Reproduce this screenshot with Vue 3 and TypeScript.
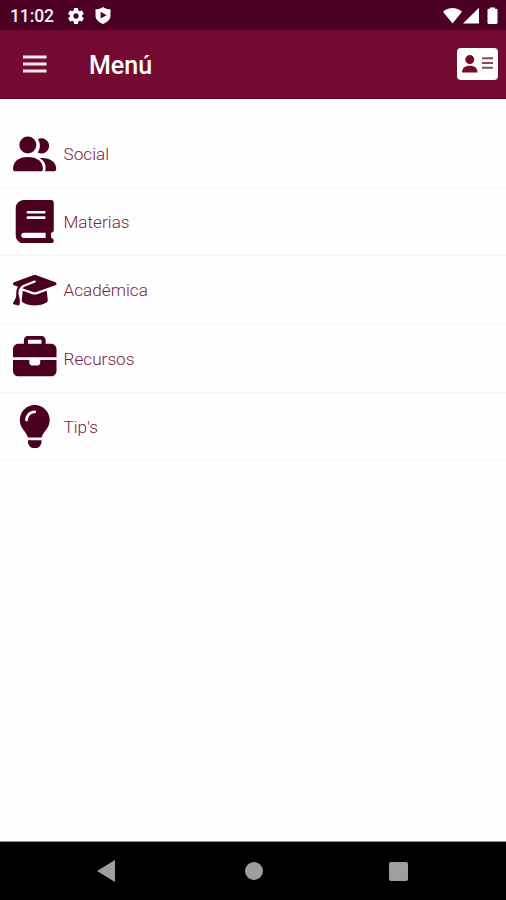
<script setup lang="ts">
interface MenuItem {
  label: string
  viewBox: string
  paths: string[]
}

const items: MenuItem[] = [
  {
    label: 'Social',
    viewBox: '0 0 44 44',
    paths: [
      'M15 4.600a8.600 8.600 0 1 1 0 17.200a8.600 8.600 0 1 1 0-17.200z',
      'M25.200 7.300a7.700 7.700 0 1 1-.2 13.500c2.900-4.300 3-9.200.2-13.500z',
      'M0 37.300C0 30 5.500 25.200 15 25.200s15.300 4.800 15.300 12.100c0 1.600-.8 2.400-2.400 2.400H2.400C.8 39.700 0 38.900 0 37.300z',
      'M27.200 26.500c9.800-.8 16.500 3.500 16.500 10.800 0 1.600-.8 2.400-2.300 2.400h-8.900c1.500-5.500-.2-10.200-5.300-13.200z',
    ],
  },
  {
    label: 'Materias',
    viewBox: '-32 0 512 512',
    paths: [
      'M96 0C43 0 0 43 0 96V416c0 53 43 96 96 96H384h32c17.700 0 32-14.300 32-32s-14.300-32-32-32V384c17.700 0 32-14.300 32-32V32c0-17.700-14.300-32-32-32H384 96zm0 384H352v64H96c-17.700 0-32-14.300-32-32s14.300-32 32-32zm32-240c0-8.800 7.200-16 16-16H336c8.800 0 16 7.200 16 16s-7.200 16-16 16H144c-8.800 0-16-7.200-16-16zm16 48H336c8.800 0 16 7.200 16 16s-7.200 16-16 16H144c-8.800 0-16-7.200-16-16s7.200-16 16-16z',
    ],
  },
  {
    label: 'Académica',
    viewBox: '0 -71 640 640',
    paths: [
      'M320 32c-8.100 0-16.100 1.400-23.700 4.100L15.800 137.400C6.300 140.900 0 149.900 0 160s6.300 19.100 15.800 22.600l57.900 20.900C57.300 229.300 48 259.800 48 291.900v28.100c0 28.400-10.800 57.700-22.300 80.800c-6.500 13-13.900 25.800-22.500 37.600C0 442.700-.9 448.300.9 453.400s6 8.900 11.200 10.200l64 16c4.200 1.100 8.700.3 12.400-2s6.300-6.100 7.100-10.400c8.600-42.800 4.300-81.200-2.100-108.700C90.300 344.300 86 329.800 80 316.500v-24.600c0-30.200 10.200-58.700 27.900-81.500c12.900-15.500 29.600-28 49.200-35.700l157-61.700c8.200-3.200 17.500.8 20.700 9s-.8 17.500-9 20.700l-157 61.700c-12.400 4.900-23.300 12.400-32.200 21.600l159.600 57.600c7.600 2.700 15.600 4.100 23.700 4.100s16.100-1.400 23.700-4.100L624.200 182.600c9.500-3.400 15.800-12.500 15.800-22.600s-6.300-19.100-15.800-22.600L343.700 36.100C336.100 33.400 328.100 32 320 32zM128 408c0 35.300 86 72 192 72s192-36.700 192-72L496.700 262.600 354.500 314c-11.100 4-22.800 6-34.500 6s-23.500-2-34.500-6L143.300 262.600 128 408z',
    ],
  },
  {
    label: 'Recursos',
    viewBox: '0 5 512 512',
    paths: [
      'M184 48H328c4.400 0 8 3.600 8 8V96H176V56c0-4.400 3.600-8 8-8zm-56 8V96H64C28.700 96 0 124.700 0 160v96H512V160c0-35.300-28.700-64-64-64H384V56c0-30.900-25.100-56-56-56H184c-30.900 0-56 25.100-56 56zM512 288H320v32c0 17.700-14.300 32-32 32H224c-17.700 0-32-14.300-32-32V288H0V416c0 35.300 28.700 64 64 64H448c35.300 0 64-28.700 64-64V288z',
    ],
  },
  {
    label: "Tip's",
    viewBox: '-64 0 512 512',
    paths: [
      'M272 384c9.600-31.900 29.500-59.100 49.200-86.200c5.200-7.100 10.400-14.200 15.400-21.400c19.800-28.500 31.400-63 31.400-100.300C368 78.800 289.200 0 192 0S16 78.800 16 176c0 37.300 11.600 71.900 31.400 100.300c5 7.200 10.200 14.300 15.400 21.400c19.800 27.100 39.700 54.400 49.200 86.200H272zM192 512c44.200 0 80-35.800 80-80V416H112v16c0 44.200 35.800 80 80 80zM112 176c0 8.800-7.200 16-16 16s-16-7.200-16-16c0-61.900 50.100-112 112-112c8.800 0 16 7.200 16 16s-7.200 16-16 16c-44.200 0-80 35.800-80 80z',
    ],
  },
]
</script>

<template>
  <div class="screen">
    <div class="status">
      <span class="clock">11:02</span>
      <svg class="gear" viewBox="2 2 20 20">
        <path fill-rule="evenodd" d="M19.400 13c.1-.7.1-1.300 0-2l2.100-1.600c.2-.2.300-.4.100-.6l-2-3.500c-.1-.2-.4-.3-.6-.2l-2.500 1c-.5-.4-1.100-.7-1.700-1l-.4-2.700c0-.2-.2-.4-.5-.4h-4c-.2 0-.4.200-.5.400L9 5.100c-.6.200-1.100.600-1.700 1l-2.500-1c-.2-.1-.5 0-.6.200l-2 3.500c-.1.200-.1.500.1.600L4.500 11c-.1.700-.1 1.300 0 2l-2.100 1.600c-.2.200-.3.400-.1.600l2 3.500c.1.200.4.300.6.200l2.500-1c.5.400 1.100.7 1.700 1l.4 2.700c0 .2.200.4.500.4h4c.2 0 .4-.2.500-.4l.4-2.700c.6-.2 1.100-.6 1.700-1l2.500 1c.2.100.5 0 .6-.2l2-3.500c.1-.2.100-.5-.1-.6L19.400 13zM12 15.300a3.300 3.300 0 1 1 0-6.600 3.300 3.300 0 0 1 0 6.600z" />
      </svg>
      <svg class="shield" viewBox="0 0 16 17">
        <path fill-rule="evenodd" d="M8 0c2 1.600 4.500 2.300 7.500 2.300v6.200c0 3.800-3 6.700-7.500 8.500C3.500 15.200.5 12.300.5 8.500V2.300C3.500 2.300 6 1.600 8 0zM5.600 4.800v6.800L11.600 8.200z" />
      </svg>
      <svg class="signals" viewBox="0 0 56 18">
        <path d="M0 4.700C5.500-.2 13.500-.2 19 4.700L9.500 16.500z" />
        <path d="M36 .8v15.700H20z" />
        <path d="M47 1.800V.5h5v1.300h1.300c.7 0 1.200.5 1.200 1.200v12.700c0 .7-.5 1.200-1.200 1.200h-7.600c-.7 0-1.200-.5-1.200-1.200V3c0-.7.500-1.200 1.200-1.200z" />
      </svg>
    </div>

    <header class="bar">
      <svg class="burger" viewBox="0 0 24 18">
        <path d="M0 .5h23.500v3H0zM0 7.500h23.500v3H0zM0 14.500h23.500v3H0z" />
      </svg>
      <h1 class="title">Menú</h1>
      <svg class="card" viewBox="0 0 41 32">
        <rect class="card-face" width="41" height="32" rx="4" />
        <circle cx="12.800" cy="11.600" r="4.500" />
        <path d="M5 24.500c0-4.200 2.700-6.700 7.800-6.700s7.700 2.500 7.700 6.700z" />
        <path class="card-lines" d="M25 10.300h11M25 15h11M25 19.700h11" />
      </svg>
    </header>

    <main class="menu">
      <div v-for="item in items" :key="item.label" class="row">
        <svg class="icon" :viewBox="item.viewBox">
          <path v-for="(d, i) in item.paths" :key="i" :d="d" />
        </svg>
        <span class="label">{{ item.label }}</span>
      </div>
    </main>

    <nav class="nav">
      <svg class="back" viewBox="0 0 18 22"><path d="M18 0v22L0 11z" /></svg>
      <span class="home"></span>
      <span class="recent"></span>
    </nav>
  </div>
</template>

<style>
body {
  margin: 0;
}
</style>

<style scoped>
.screen {
  display: flex;
  flex-direction: column;
  height: 900px;
  width: 506px;
  overflow: hidden;
  background: #fefefe;
  font-family: Roboto, sans-serif;
}
.status {
  display: flex;
  align-items: center;
  box-sizing: border-box;
  height: 30px;
  padding: 1px 7px 0 10px;
  background: #4b0024;
  color: #f7eef2;
  fill: #fff;
}
.clock {
  width: 58px;
  font-size: 17.500px;
  font-weight: 500;
  letter-spacing: -0.1px;
}
.gear {
  width: 16px;
  height: 16px;
}
.shield {
  width: 16px;
  height: 17px;
  margin-left: 11px;
}
.signals {
  width: 56px;
  height: 18px;
  margin-left: auto;
}
.bar {
  display: flex;
  align-items: center;
  box-sizing: border-box;
  height: 69px;
  padding: 0 8px 0 23px;
  border-bottom: 1px solid #650329;
  background: #740a32;
  color: #fff;
}
.burger {
  width: 24px;
  height: 18px;
  fill: #fbe9ee;
}
.title {
  margin: 3px 0 0 42px;
  font-size: 25px;
  font-weight: 500;
  line-height: 30px;
}
.card {
  width: 41px;
  height: 32px;
  margin-left: auto;
  fill: #740c24;
}
.card-face {
  fill: #fff;
}
.card-lines {
  stroke: #8b4660;
  stroke-width: 2;
}
.menu {
  flex: 1;
  padding-top: 20.700px;
}
.row {
  display: flex;
  align-items: center;
  gap: 7px;
  box-sizing: border-box;
  height: 68.300px;
  padding-left: 13px;
  border-bottom: 1px solid #f5f5f5;
}
.icon {
  width: 43.500px;
  height: 43.500px;
  fill: #4b001f;
}
.label {
  padding-top: 1px;
  color: #781d43;
  font-size: 17.200px;
  font-weight: 300;
  line-height: 24px;
}
.nav {
  display: flex;
  align-items: center;
  box-sizing: border-box;
  height: 59px;
  padding: 0 97px;
  border-top: 1px solid #909090;
  background: #000;
}
.back {
  width: 18px;
  height: 22px;
  fill: #9e9e9e;
}
.home {
  width: 18px;
  height: 18px;
  margin-left: 130px;
  border-radius: 50%;
  background: #9e9e9e;
}
.recent {
  width: 19px;
  height: 19px;
  margin-left: 126px;
  border-radius: 2px;
  background: #9e9e9e;
}
</style>
